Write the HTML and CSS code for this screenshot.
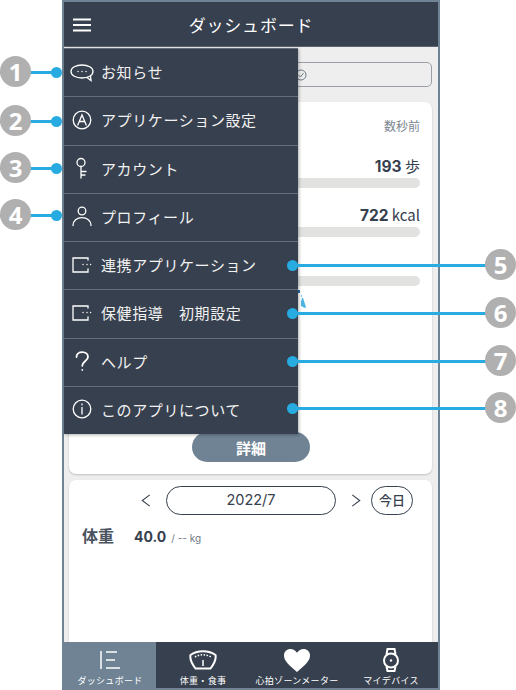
FILE: index.html
```html
<!DOCTYPE html>
<html lang="ja">
<head>
    <meta charset="UTF-8">
    <meta name="viewport" content="width=device-width, initial-scale=1.0">
    <title>ダッシュボード</title>
    <link rel="stylesheet" href="styles.css">
</head>
<body>
    <div class="phone">
        <header class="app-header">
            <svg class="hamburger" viewBox="0 0 18 14">
                <path d="M0 1.500h18M0 7h18M0 12.500h18"/>
            </svg>
            <h1>ダッシュボード</h1>
        </header>

        <main class="content">
            <div class="date-select">
                <svg viewBox="0 0 12 12">
                    <circle cx="6" cy="6" r="5"/>
                    <path d="M3.500 6l2 2 3-4"/>
                </svg>
            </div>

            <section class="card summary">
                <p class="updated">数秒前</p>
                <div class="metric metric-steps">
                    <p><b>193</b> 歩</p>
                    <div class="bar"></div>
                </div>
                <div class="metric metric-kcal">
                    <p><b>722</b> kcal</p>
                    <div class="bar"></div>
                </div>
                <div class="bar bar-last"></div>
                <svg class="runner" viewBox="0 0 8 18">
                    <path d="M0 0h2v3H0z" fill="#2a6fb0"/>
                    <path d="M3 5h1v2H3z" fill="#7cc7e8"/>
                    <path d="M4 8l1 0 3 9-1 1-4-2 0-4z" fill="#4db3e0"/>
                </svg>
                <button class="detail-btn">詳細</button>
            </section>

            <section class="card monthly">
                <div class="month-nav">
                    <svg class="chevron" viewBox="0 0 10 14"><path d="M9 1L1 7l8 6"/></svg>
                    <div class="month-pill">2022/7</div>
                    <svg class="chevron" viewBox="0 0 10 14"><path d="M1 1l8 6-8 6"/></svg>
                    <div class="today-pill">今日</div>
                </div>
                <div class="weight">
                    <b class="weight-label">体重</b>
                    <b class="weight-value">40.0</b>
                    <span class="weight-unit">/ -- kg</span>
                </div>
            </section>
        </main>

        <nav class="tabs">
            <div class="tab active">
                <svg viewBox="0 0 28 24">
                    <path d="M5 3v18M10 4h11M10 12h9M10 20h14"/>
                </svg>
                <span>ダッシュボード</span>
            </div>
            <div class="tab">
                <svg viewBox="0 0 28 24">
                    <path class="thick" d="M1.500 7C8 2 20 2 26.500 7c.8 4-1.500 9-5 13.500h-15C3 16 .7 11 1.500 7z"/>
                    <path d="M14 18v-6"/>
                    <path d="M6 9c5-3 11-3 16 0" stroke-dasharray="1.500 1.500"/>
                </svg>
                <span>体重・食事</span>
            </div>
            <div class="tab">
                <svg viewBox="0 0 28 24">
                    <path class="solid" d="M14 24C6 17 1 13 1 7.500C1 3.500 4 1 7.500 1C10 1 12.500 2.300 14 4.800C15.500 2.300 18 1 20.500 1C24 1 27 3.500 27 7.500C27 13 22 17 14 24z"/>
                </svg>
                <span>心拍ゾーンメーター</span>
            </div>
            <div class="tab">
                <svg viewBox="0 0 28 24">
                    <circle class="thick" cx="14" cy="12.500" r="7"/>
                    <path class="thick" d="M9.500 6.500l1-5.500h7l1 5.500M9.500 18.500l1 4.500h7l1-4.500"/>
                    <circle class="solid" cx="14" cy="12.500" r="1.200"/>
                </svg>
                <span>マイデバイス</span>
            </div>
        </nav>

        <ul class="side-menu">
            <li>
                <svg viewBox="0 0 20 20">
                    <path d="M10 3c6 0 11 2.500 11 6.500S16 16 10 16C4 16-1 13.500-1 9.500S4 3 10 3zM15 15.500l4 3-.5-4.500"/>
                    <path d="M6 9.500h.1M10 9.500h.1M14 9.500h.1"/>
                </svg>
                お知らせ
            </li>
            <li>
                <svg viewBox="0 0 20 20">
                    <circle cx="10" cy="10" r="8.800"/>
                    <path d="M5.800 15L10 5l4.200 10M7.200 11.500h5.600"/>
                </svg>
                アプリケーション設定
            </li>
            <li>
                <svg viewBox="0 0 20 20">
                    <circle cx="9" cy="4.500" r="4"/>
                    <path d="M9 8.500V20M9 13.500h5M9 17h4"/>
                </svg>
                アカウント
            </li>
            <li>
                <svg viewBox="0 0 20 20">
                    <circle cx="10" cy="5" r="3.800"/>
                    <path d="M1 19.500c0-5 4-7.800 9-7.800s9 2.800 9 7.800"/>
                </svg>
                プロフィール
            </li>
            <li>
                <svg viewBox="0 0 20 18">
                    <path d="M16 4V2H1v14h15v-3"/>
                    <path d="M11 8.500h.1M15 8.500h.1M18.500 8.500h.1"/>
                </svg>
                連携アプリケーション
            </li>
            <li>
                <svg viewBox="0 0 20 18">
                    <path d="M16 4V2H1v14h15v-3"/>
                    <path d="M11 8.500h.1M15 8.500h.1M18.500 8.500h.1"/>
                </svg>
                保健指導　初期設定
            </li>
            <li>
                <svg class="help-icon" viewBox="0 0 20 20">
                    <path d="M4.500 6c0-3 2.500-4.800 5.800-4.800S16 3.200 16 6c0 3.800-5.700 4.300-5.700 8.800"/>
                    <path d="M10.300 18.800v.1"/>
                </svg>
                ヘルプ
            </li>
            <li>
                <svg viewBox="0 0 20 20">
                    <circle cx="10" cy="10" r="8.800"/>
                    <path d="M10 8.500V15M10 5v.8"/>
                </svg>
                このアプリについて
            </li>
        </ul>
    </div>

    <div class="callout left" style="top: 72px;"><i>1</i></div>
    <div class="callout left" style="top: 121px;"><i>2</i></div>
    <div class="callout left" style="top: 168px;"><i>3</i></div>
    <div class="callout left" style="top: 215px;"><i>4</i></div>
    <div class="callout right" style="top: 265px;"><i>5</i></div>
    <div class="callout right" style="top: 313px;"><i>6</i></div>
    <div class="callout right" style="top: 361px;"><i>7</i></div>
    <div class="callout right" style="top: 408px;"><i>8</i></div>
</body>
</html>
```

FILE: styles.css
```css
html, body {
    margin: 0;
    padding: 0;
}
body {
    position: relative;
    width: 516px;
    height: 690px;
    overflow: hidden;
    background-color: white;
    font-family: "Noto Sans CJK JP", "Noto Sans", sans-serif;
    color: #37404e;
}
p, h1, ul {
    margin: 0;
    padding: 0;
}
.phone {
    position: relative;
    box-sizing: border-box;
    width: 378px;
    height: 690px;
    margin-left: 62px;
    border: 2px solid #6f8394;
    display: flex;
    flex-direction: column;
    background-color: #eeeeee;
}
.app-header {
    flex: none;
    height: 45px;
    display: flex;
    align-items: center;
    justify-content: center;
    position: relative;
    background-color: #37404e;
    border-bottom: 1px solid #5c6470;
    box-sizing: border-box;
}
.app-header h1 {
    font-size: 17px;
    font-weight: 400;
    color: white;
    letter-spacing: 0.8px;
}
.hamburger {
    position: absolute;
    left: 9px;
    top: 16px;
    width: 18px;
    height: 14px;
    fill: none;
    stroke: white;
    stroke-width: 1.800;
}
.content {
    flex: 1;
    min-height: 0;
    display: flex;
    flex-direction: column;
    padding: 15px 6px 0 5px;
}
.date-select {
    box-sizing: border-box;
    height: 25px;
    margin-bottom: 15px;
    border: 1px solid #9a9fa6;
    border-radius: 5px;
    display: flex;
    align-items: center;
    padding-left: 225px;
}
.date-select svg {
    width: 12px;
    height: 12px;
    fill: none;
    stroke: #6f7a86;
    stroke-width: 1;
}
.card {
    background-color: white;
    border-radius: 7px;
    box-shadow: 0 1px 2px rgba(0,0,0,0.2);
}
.summary {
    position: relative;
    box-sizing: border-box;
    height: 372px;
    margin-bottom: 6px;
    padding: 16px 12px 0;
}
.updated {
    font-size: 12px;
    line-height: 16px;
    text-align: right;
    color: #7c8791;
}
.metric {
    text-align: right;
}
.metric p {
    font-size: 15px;
    line-height: 20px;
}
.metric b {
    font-family: Inter, sans-serif;
    font-size: 15.500px;
    font-weight: 700;
}
.metric-steps {
    margin-top: 22px;
}
.metric-kcal {
    margin-top: 17px;
}
.bar {
    height: 10px;
    margin-top: 1px;
    border-radius: 5px;
    background-color: #e2e2e0;
}
.bar-last {
    margin-top: 39px;
}
.runner {
    position: absolute;
    left: 229px;
    top: 188px;
    width: 8px;
    height: 18px;
}
.detail-btn {
    position: absolute;
    left: 123px;
    top: 330px;
    width: 118px;
    height: 30px;
    border: none;
    border-radius: 15px;
    background-color: #6f8394;
    color: white;
    font-family: inherit;
    font-size: 15px;
    font-weight: 700;
}
.monthly {
    flex: 1;
    margin-bottom: 0;
    border-radius: 7px 7px 0 0;
    padding: 6px 13px 0;
}
.month-nav {
    display: flex;
    align-items: center;
    height: 29px;
    padding-left: 59px;
}
.chevron {
    width: 10px;
    height: 13px;
    fill: none;
    stroke: #37404e;
    stroke-width: 1.200;
}
.month-pill {
    box-sizing: border-box;
    width: 170px;
    height: 29px;
    margin: 0 15px;
    border: 1px solid #37404e;
    border-radius: 15px;
    text-align: center;
    font-family: Inter, sans-serif;
    font-size: 14.500px;
    line-height: 26px;
}
.today-pill {
    box-sizing: border-box;
    width: 42px;
    height: 29px;
    margin-left: 10px;
    border: 1px solid #37404e;
    border-radius: 15px;
    text-align: center;
    font-size: 13px;
    font-weight: 500;
    line-height: 25px;
}
.weight {
    display: flex;
    align-items: baseline;
    margin-top: 8px;
}
.weight-label {
    font-size: 16px;
    width: 52px;
    color: #4a5360;
}
.weight-value {
    font-family: Inter, sans-serif;
    font-size: 14px;
    margin-right: 5px;
}
.weight-unit {
    font-family: Inter, sans-serif;
    font-size: 10px;
    color: #6f7a86;
}
.tabs {
    flex: none;
    height: 46px;
    display: flex;
    background-color: #37404e;
}
.tab {
    flex: 1;
    display: flex;
    flex-direction: column;
    align-items: center;
    justify-content: flex-end;
    color: white;
    font-size: 9px;
    line-height: 11px;
    letter-spacing: 0.3px;
    padding-bottom: 2px;
}
.tab.active {
    flex: none;
    width: 92px;
    background-color: #6f8394;
}
.tab svg {
    width: 28px;
    height: 24px;
    margin-bottom: 3px;
    fill: none;
    stroke: white;
    stroke-width: 1.500;
}
.tab svg .solid {
    fill: white;
    stroke: none;
}
.tab svg .thick {
    stroke-width: 2;
}
.side-menu {
    position: absolute;
    left: 0;
    top: 46px;
    width: 234px;
    list-style: none;
    background-color: #37404e;
    box-shadow: 1px 1px 3px rgba(0,0,0,0.3);
}
.side-menu li {
    box-sizing: border-box;
    height: 48.250px;
    display: flex;
    align-items: center;
    gap: 9px;
    padding: 0 0 2px 8px;
    border-top: 1px solid #666d78;
    font-size: 15px;
    letter-spacing: 0.6px;
    color: #f2f2f2;
}
.side-menu svg {
    flex: none;
    width: 20px;
    height: 20px;
    overflow: visible;
    fill: none;
    stroke: white;
    stroke-width: 1.300;
    stroke-linecap: round;
}
.side-menu .help-icon {
    stroke-width: 1.800;
}
.callout {
    position: absolute;
    height: 3px;
    margin-top: -1px;
    background-color: #27abe0;
}
.callout::after {
    content: "";
    position: absolute;
    top: -4px;
    width: 11px;
    height: 11px;
    border-radius: 50%;
    background-color: #27abe0;
}
.callout i {
    position: absolute;
    top: -15px;
    width: 31px;
    height: 31px;
    border-radius: 50%;
    background-color: #b0b0b0;
    color: white;
    font-family: "Open Sans", sans-serif;
    font-style: normal;
    font-weight: 700;
    font-size: 24px;
    line-height: 31px;
    text-align: center;
}
.callout.left {
    left: 0;
    width: 56px;
}
.callout.left::after {
    right: -6px;
}
.callout.left i {
    left: 0;
}
.callout.right {
    left: 293px;
    width: 207px;
}
.callout.right::after {
    left: -6px;
}
.callout.right i {
    right: -16px;
}
```
